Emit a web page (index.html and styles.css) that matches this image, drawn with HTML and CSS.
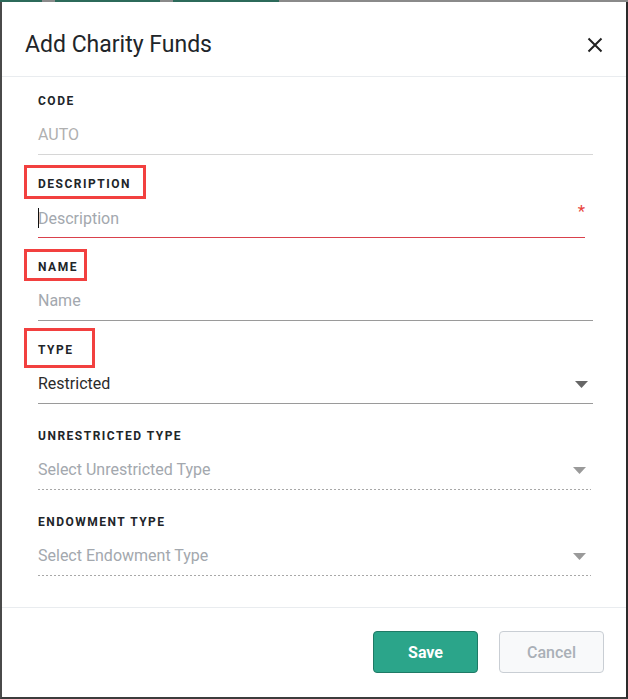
FILE: index.html
```html
<!DOCTYPE html>
<html>
<head>
<meta charset="utf-8">
<link rel="stylesheet" href="styles.css">
</head>
<body>
<div class="frame">
  <div class="topstrip">
    <span class="seg g1"></span><span class="seg y1"></span><span class="seg g2"></span><span class="seg y2"></span><span class="seg g3"></span><span class="seg y3"></span>
  </div>
  <div class="modal">
    <div class="header">
      <h1 class="title">Add Charity Funds</h1>
      <svg class="close" width="16" height="16" viewBox="0 0 16 16"><path d="M1.5 1.5 L14.5 14.5 M14.5 1.5 L1.5 14.5" stroke="#222" stroke-width="2" fill="none"/></svg>
    </div>
    <div class="body">
      <div class="field">
        <div class="label">CODE</div>
        <div class="input disabled"><span class="ph light">AUTO</span></div>
      </div>
      <div class="field">
        <div class="label">DESCRIPTION<span class="mark m-desc"></span></div>
        <div class="input error">
          <span class="cursor"></span><span class="ph">Description</span>
          <span class="req">*</span>
        </div>
      </div>
      <div class="field">
        <div class="label">NAME<span class="mark m-name"></span></div>
        <div class="input solid"><span class="ph">Name</span></div>
      </div>
      <div class="field sel">
        <div class="label">TYPE<span class="mark m-type"></span></div>
        <div class="input solid select"><span class="val">Restricted</span>
          <svg class="caret" width="13" height="7" viewBox="0 0 13 7"><path d="M0 0 H13 L6.5 7 Z" fill="#666"/></svg>
        </div>
      </div>
      <div class="field sel">
        <div class="label">UNRESTRICTED TYPE</div>
        <div class="input dotted select"><span class="ph">Select Unrestricted Type</span>
          <svg class="caret" width="13" height="7" viewBox="0 0 13 7"><path d="M0 0 H13 L6.5 7 Z" fill="#9a9a9a"/></svg>
        </div>
      </div>
      <div class="field sel">
        <div class="label">ENDOWMENT TYPE</div>
        <div class="input dotted select"><span class="ph">Select Endowment Type</span>
          <svg class="caret" width="13" height="7" viewBox="0 0 13 7"><path d="M0 0 H13 L6.5 7 Z" fill="#9a9a9a"/></svg>
        </div>
      </div>
    </div>
    <div class="footer">
      <button class="btn save">Save</button>
      <button class="btn cancel">Cancel</button>
    </div>
  </div>
</div>
</body>
</html>
```
FILE: styles.css
```css
* { box-sizing: border-box; }
html, body { margin: 0; padding: 0; background: #fff; }
body { font-family: Roboto, "Liberation Sans", sans-serif; color: #212529; }

.frame {
  width: 628px;
  height: 699px;
  display: flex;
  flex-direction: column;
  border-left: 2px solid #4a4a4a;
  border-right: 2px solid #2a2a2a;
  border-bottom: 2px solid #3c3c3c;
  background: #fff;
}
.topstrip { display: flex; height: 2px; margin-left: -2px; margin-right: -2px; }
.seg { height: 2px; display: block; }
.g1 { width: 42px; background: #2c6a5a; }
.y1 { width: 13px; background: #8a8a8a; }
.g2 { width: 105px; background: #2c6a5a; }
.y2 { width: 13px; background: #8a8a8a; }
.g3 { width: 106px; background: #2c6a5a; }
.y3 { flex: 1; background: #8a8a8a; }

.modal { flex: 1; display: flex; flex-direction: column; }

.header {
  display: flex;
  align-items: center;
  justify-content: space-between;
  padding: 27px 23px 15px 23px;
  border-bottom: 1px solid #e9ecef;
}
.title {
  margin: 0;
  font-size: 23px;
  font-weight: 400;
  line-height: 32px;
  color: #212529;
}
.close { display: block; margin-top: -1px; }

.body { padding: 16px 33px 7px 36px; }

.field { margin-bottom: 21px; }
.field.sel { margin-bottom: 24px; }

.label {
  position: relative;
  font-size: 12px;
  font-weight: 700;
  letter-spacing: 1.5px;
  line-height: 16px;
  color: #212529;
}
.mark {
  position: absolute;
  left: -14px;
  border: 3px solid #f2403f;
}
.m-desc { top: -11px; width: 122px; height: 34px; }
.m-name { top: -10px; width: 63px; height: 32px; }
.m-type { top: -14px; width: 71px; height: 40px; }

.input {
  position: relative;
  margin-top: 6px;
  padding: 8px 0 7px 0;
  line-height: 24px;
  font-size: 16px;
  border-bottom: 1px solid #999;
  display: flex;
  align-items: center;
}
.input.disabled { border-bottom-color: #d6d6d6; }
.input.error { border-bottom-color: #d9414c; margin-right: 8px; padding-top: 9px; padding-bottom: 6px; }
.input.solid { border-bottom-color: #9a9a9a; }
.input.dotted {
  border-bottom: 1px solid transparent;
  margin-right: 2px;
  background-image: linear-gradient(to right, #a8a8a8 50%, transparent 50%);
  background-size: 4px 1px;
  background-repeat: repeat-x;
  background-position: left bottom;
  background-origin: border-box;
}
.ph { color: #a3a8ae; }
.ph.light { color: #b0b0b0; }
.val { color: #2b2b2b; }
.cursor {
  position: absolute;
  left: 0;
  top: 10px;
  width: 1px;
  height: 20px;
  background: #111;
}
.req {
  position: absolute;
  right: 0;
  top: 3px;
  color: #e8453c;
  font-size: 17px;
  line-height: 20px;
}
.select { justify-content: space-between; }
.caret { display: block; margin-right: 5px; }

.footer {
  margin-top: 0;
  border-top: 1px solid #e9ecef;
  padding: 23px 22px 0 0;
  display: flex;
  justify-content: flex-end;
  gap: 21px;
}
.btn {
  width: 105px;
  height: 42px;
  border-radius: 4px;
  font-family: Roboto, "Liberation Sans", sans-serif;
  font-size: 16px;
  font-weight: 700;
  padding: 0;
}
.save {
  background: #2ba58a;
  border: 1px solid #1f7a66;
  color: #fff;
}
.cancel {
  background: #f8f9fa;
  border: 1px solid #c9ced4;
  color: #aab0b7;
  font-weight: 500;
}
```
